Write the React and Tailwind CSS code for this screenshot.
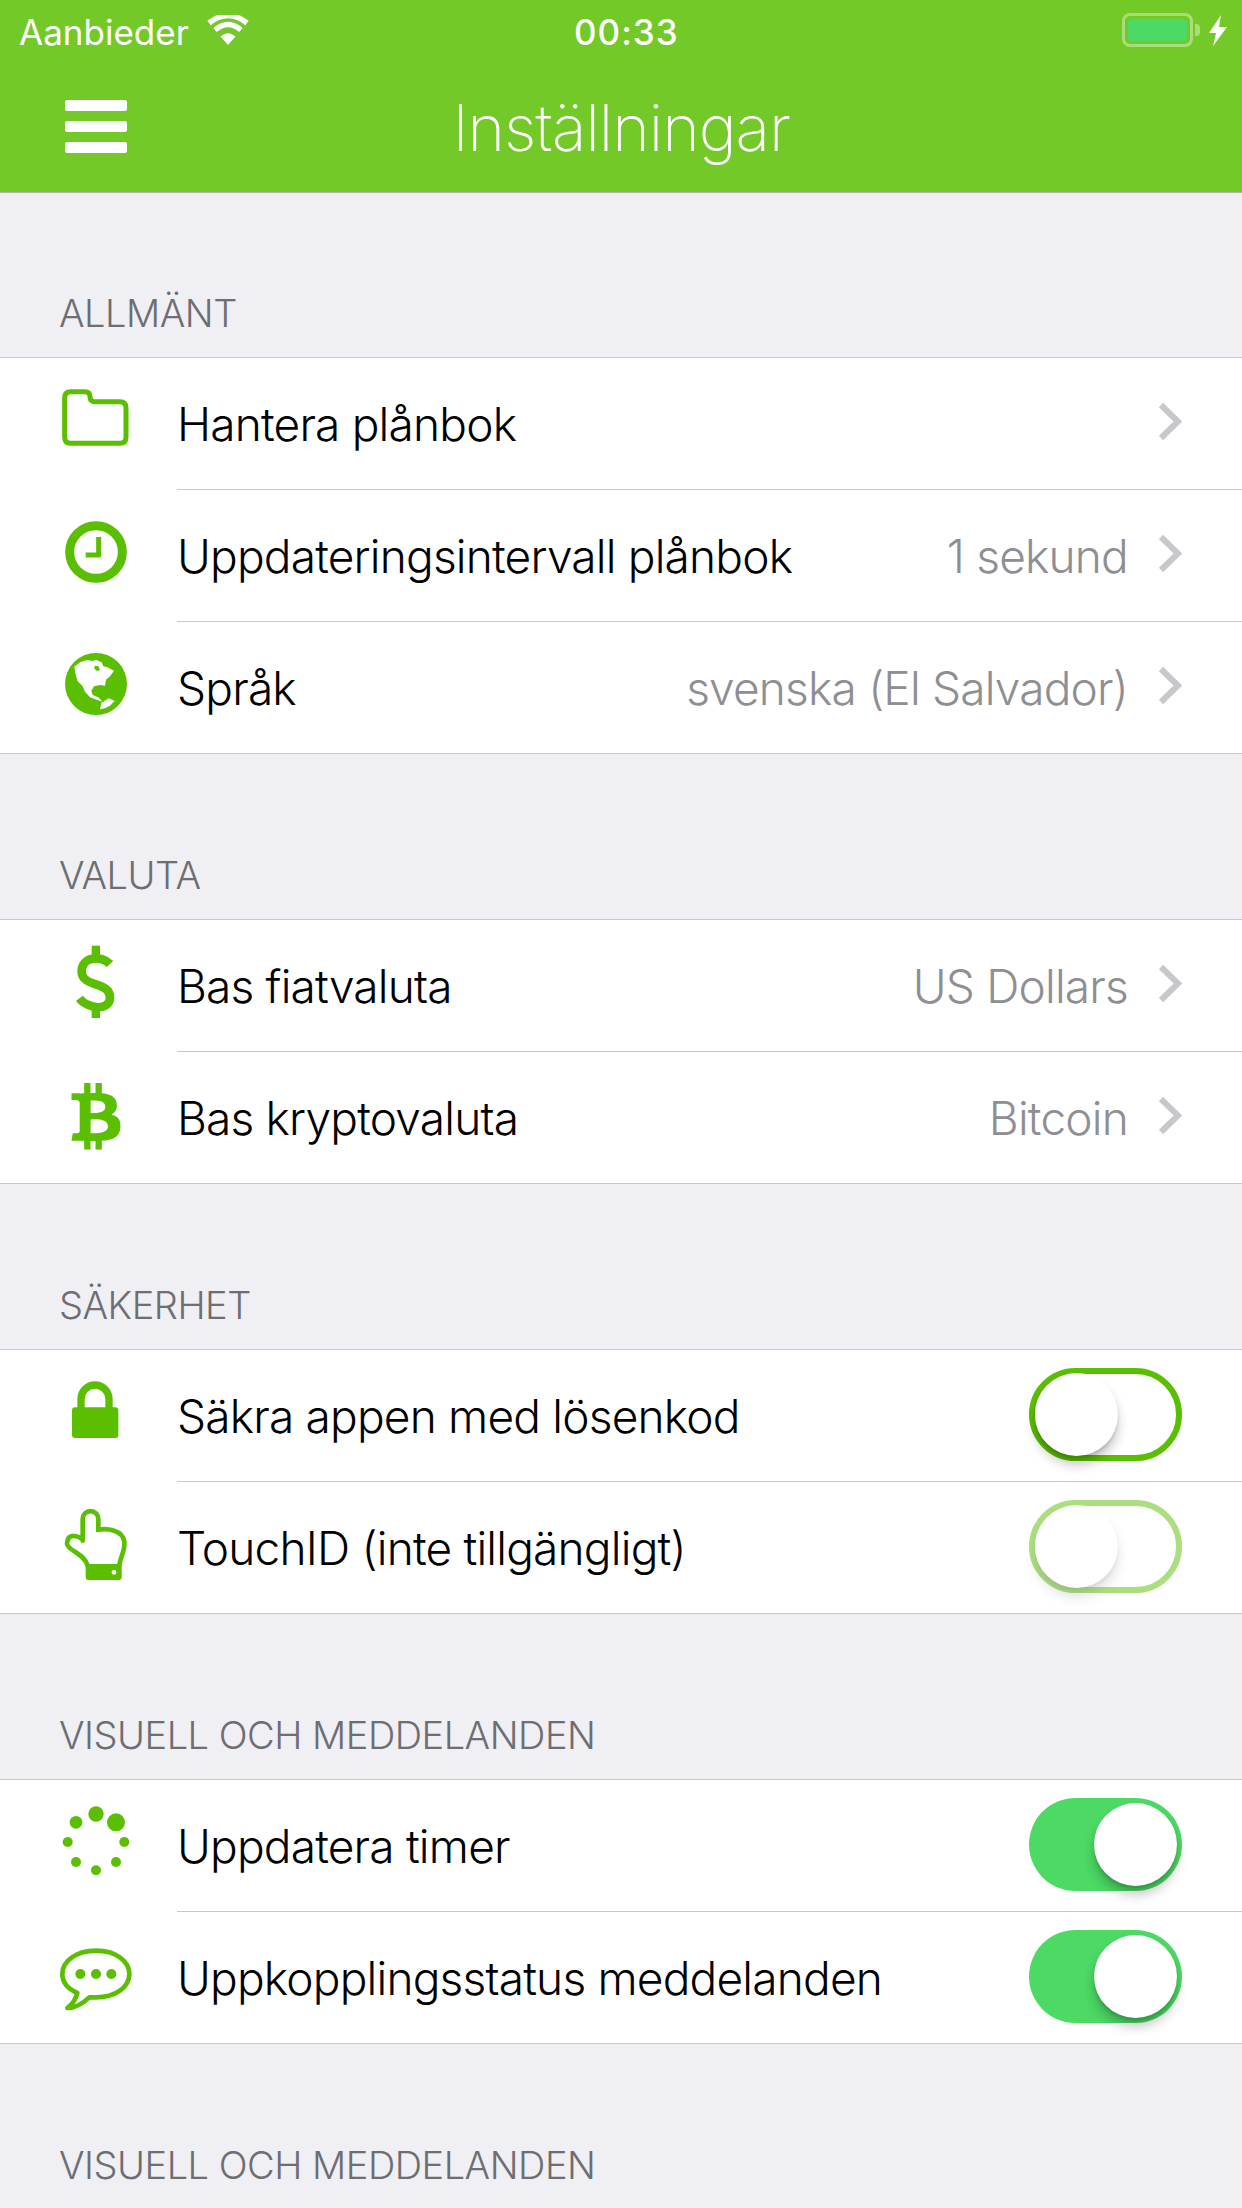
import React from "react";
import { FaBtc } from "react-icons/fa";

const G = "#5abf00";

function Icon({ y0, children }) {
  return (
    <svg width="130" height="130" viewBox={`-3 ${y0} 390 390`} className="shrink-0 ml-[29px] mr-[18px]">
      {children}
    </svg>
  );
}

const Folder = () => (
  <Icon y0={-30}>
    <path d="M122 68 H165 Q180 68 180 83 Q180 98 195 98 H270 Q288 98 288 116 V205 Q288 223 270 223 H122 Q104 223 104 205 V86 Q104 68 122 68 Z" fill="none" stroke={G} strokeWidth="15" />
  </Icon>
);
const Clock = () => (
  <Icon y0={366}>
    <circle cx="198" cy="549" r="79" fill="none" stroke={G} strokeWidth="27" />
    <path d="M206 504 V558 H167" fill="none" stroke={G} strokeWidth="15" strokeLinejoin="round" />
  </Icon>
);
const Globe = () => (
  <Icon y0={762}>
    <circle cx="198" cy="945" r="93" fill={G} />
    <path fill="#fff" d="M133 893 L150 880 L172 873 L188 876 L198 872 L215 880 L220 892 L232 895 L252 905 L240 922 L228 932 L225 950 L210 948 L192 952 L184 965 L188 978 L205 985 L218 998 L200 992 L180 985 L165 968 L158 952 L142 935 L136 912 Z" />
    <path fill={G} d="M194 890 L205 892 L210 903 L201 906 L193 899 Z" />
    <path fill="#fff" d="M210 1021 L214 1002 L236 988 L254 996 L240 1010 L225 1018 Z" />
  </Icon>
);
const Dollar = () => (
  <Icon y0={6}>
    <path d="M240 135 C215 108 152 112 155 160 C158 205 240 188 240 235 C240 278 172 270 148 238" fill="none" stroke={G} strokeWidth="26" />
    <rect x="185" y="80" width="25" height="32" fill={G} />
    <rect x="185" y="266" width="25" height="31" fill={G} />
  </Icon>
);
const Btc = () => (
  <Icon y0={402}>
    <FaBtc x={98} y={492} size={200} color={G} />
  </Icon>
);
const Lock = () => (
  <Icon y0={-54}>
    <path d="M153 122 V90 A42 42 0 0 1 237 90 V122" fill="none" stroke={G} strokeWidth="22" />
    <rect x="126" y="115" width="139" height="92" rx="9" fill={G} />
  </Icon>
);
const Hand = () => (
  <Icon y0={342}>
    <path d="M158 515 V450 A23.5 23.5 0 0 1 205 450 V482 C232 478 278 482 283 518 C286 545 270 565 268 590 M158 512 C148 502 112 488 111 525 C114 545 165 555 173 590" fill="none" stroke={G} strokeWidth="14" strokeLinecap="round" />
    <rect x="167" y="585" width="108" height="48" rx="10" fill={G} />
    <circle cx="252" cy="610" r="7" fill="#fff" />
  </Icon>
);
const Spinner = () => (
  <Icon y0={6}>
    {[[198,105,23],[258,130,27],[283,189,15],[258,249,15],[198,274,15],[138,249,15],[113,189,15],[138,130,19]].map(([x,y,r]) => (
      <circle key={x + "-" + y} cx={x} cy={y} r={r} fill={G} />
    ))}
  </Icon>
);
const Bubble = () => (
  <Icon y0={402}>
    <path d="M198 515 C140 515 97 545 97 585 C97 610 115 630 142 642 C138 660 128 675 112 687 C140 687 160 672 178 655 C185 655 192 655 198 655 C256 655 298 625 298 585 C298 545 256 515 198 515 Z" fill="none" stroke={G} strokeWidth="14" strokeLinejoin="round" />
    <circle cx="151" cy="585" r="15" fill={G} />
    <circle cx="198" cy="585" r="15" fill={G} />
    <circle cx="244" cy="585" r="15" fill={G} />
  </Icon>
);

const Chevron = () => (
  <svg width="24" height="39" viewBox="0 0 24 39" className="shrink-0 mb-[5px]">
    <path d="M3 3 L20 19.5 L3 36" fill="none" stroke="#c7c7cc" strokeWidth="6" />
  </svg>
);

function Toggle({ on, disabled }) {
  return (
    <div className={`relative w-[153px] h-[93px] rounded-full shrink-0 ${disabled ? "opacity-50" : ""} ${on ? "bg-[#4cd964]" : "border-[6px] border-[#5abf00]"}`}>
      <div className={`absolute w-[83px] h-[83px] rounded-full bg-white shadow-[0_9px_12px_rgba(0,0,0,0.22),0_3px_3px_rgba(0,0,0,0.12)] ${on ? "left-[65px] top-[5px]" : "left-0 top-[-1px]"}`} />
    </div>
  );
}

function Row({ icon, label, value, chevron, toggle, last }) {
  return (
    <div className="relative h-[132px] flex items-center bg-white pr-[60px]">
      {icon}
      <span className="flex-1 pt-px text-[46px] font-light tracking-[-0.8px] text-black whitespace-nowrap">{label}</span>
      {value && <span className="pt-px text-[46px] font-light tracking-[-0.8px] text-[#8e8e93] whitespace-nowrap mr-[30px]">{value}</span>}
      {chevron && <Chevron />}
      {toggle && <div className="mb-[3px]">{toggle}</div>}
      <div className={`absolute bottom-0 right-0 h-px bg-[#c8c7cc] ${last ? "left-0" : "left-[177px]"}`} />
    </div>
  );
}

function Section({ title, children }) {
  return (
    <section>
      <div className="h-[166px] flex items-end px-[59px] pb-[15px] border-b border-[#c8c7cc]">
        <span className="text-[38px] font-light tracking-[-0.5px] text-[#6d6d72] whitespace-nowrap">{title}</span>
      </div>
      {children}
    </section>
  );
}

function StatusBar() {
  return (
    <div className="relative h-[64px] flex items-start pt-[6px] pl-[19px] text-white text-[35px]">
      <span className="font-normal">Aanbieder</span>
      <svg width="42" height="30" viewBox="0 0 42 30" className="ml-[18px] mt-[9px]">
        <path d="M21 30 L13.5 21.5 Q21 15 28.5 21.5 Z" fill="#fff" />
        <path d="M8 15 Q21 4 34 15" fill="none" stroke="#fff" strokeWidth="5.5" />
        <path d="M2 8 Q21 -7 40 8" fill="none" stroke="#fff" strokeWidth="5.5" />
      </svg>
      <span className="absolute left-[574px] top-[6px] font-medium tracking-[1px]">00:33</span>
      <div className="absolute left-[1122px] top-[13px] w-[71px] h-[34px] rounded-[8px] border-[3px] border-[#a8dd7a] p-[3px]">
        <div className="w-full h-full rounded-[4px] bg-[#4cd964]" />
      </div>
      <div className="absolute left-[1195px] top-[24px] w-[5px] h-[12px] rounded-r-[4px] bg-[#a8dd7a]" />
      <svg width="18" height="31" viewBox="0 0 18 31" className="absolute left-[1209px] top-[15px]">
        <path d="M12 0 L0 18 H7 L4 31 L18 12 H10 Z" fill="#fff" />
      </svg>
    </div>
  );
}

export default function App() {
  return (
    <div className="w-[1242px] h-[2208px] overflow-hidden bg-[#efeff4] font-['Inter',sans-serif]">
      <header className="h-[193px] bg-[#72c927] border-b border-[#b2b2b2]">
        <StatusBar />
        <div className="relative flex justify-center h-[128px]">
          <div className="absolute left-[65px] top-[36px] w-[62px] flex flex-col gap-[10px]">
            <div className="h-[11px] rounded-[2px] bg-white" />
            <div className="h-[11px] rounded-[2px] bg-white" />
            <div className="h-[11px] rounded-[2px] bg-white" />
          </div>
          <h1 className="text-[64px] font-extralight tracking-[-1px] text-white leading-[128px]">Inställningar</h1>
        </div>
      </header>
      <main className="-mt-[1px]">
        <Section title="ALLMÄNT">
          <Row icon={<Folder />} label="Hantera plånbok" chevron />
          <Row icon={<Clock />} label="Uppdateringsintervall plånbok" value="1 sekund" chevron />
          <Row icon={<Globe />} label="Språk" value="svenska (El Salvador)" chevron last />
        </Section>
        <Section title="VALUTA">
          <Row icon={<Dollar />} label="Bas fiatvaluta" value="US Dollars" chevron />
          <Row icon={<Btc />} label="Bas kryptovaluta" value="Bitcoin" chevron last />
        </Section>
        <Section title="SÄKERHET">
          <Row icon={<Lock />} label="Säkra appen med lösenkod" toggle={<Toggle />} />
          <Row icon={<Hand />} label="TouchID (inte tillgängligt)" toggle={<Toggle disabled />} last />
        </Section>
        <Section title="VISUELL OCH MEDDELANDEN">
          <Row icon={<Spinner />} label="Uppdatera timer" toggle={<Toggle on />} />
          <Row icon={<Bubble />} label="Uppkopplingsstatus meddelanden" toggle={<Toggle on />} last />
        </Section>
        <Section title="VISUELL OCH MEDDELANDEN" />
      </main>
    </div>
  );
}
